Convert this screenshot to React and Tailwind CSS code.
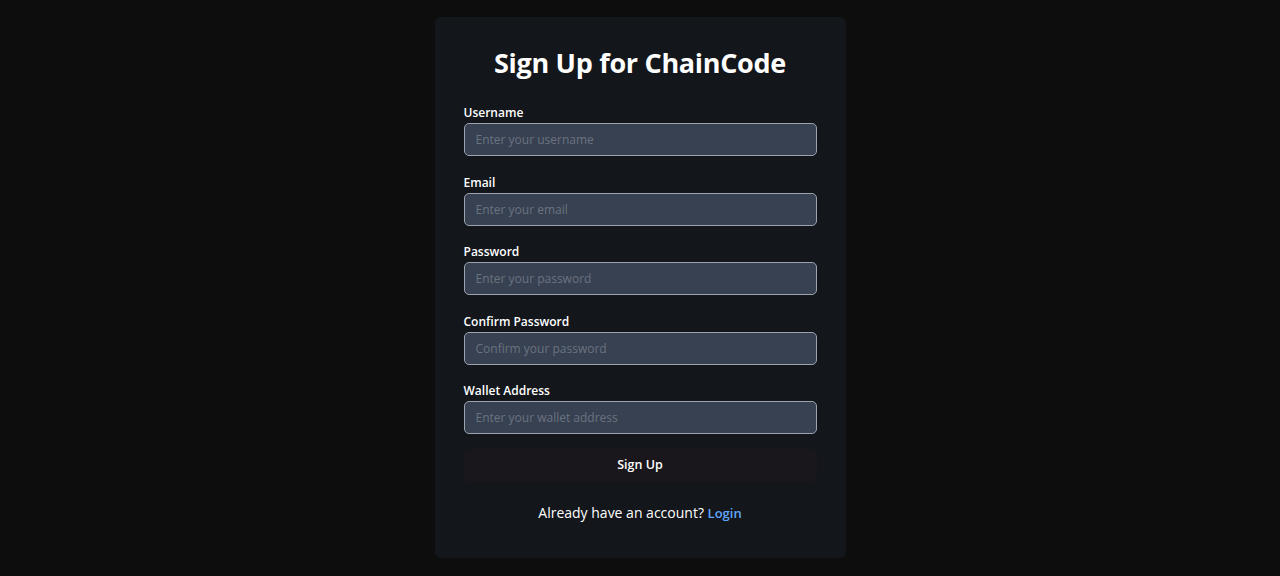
export default function App() {
  const fields = [
    ["Username", "Enter your username", "text"],
    ["Email", "Enter your email", "email"],
    ["Password", "Enter your password", "password"],
    ["Confirm Password", "Confirm your password", "password"],
    ["Wallet Address", "Enter your wallet address", "text"],
  ];
  return (
    <div
      className="min-h-[576px] w-full bg-[#0d0d0d] flex justify-center pt-[17px]"
      style={{ fontFamily: '"Open Sans", "Noto Sans", sans-serif' }}
    >
      <div className="w-[411px] h-[541px] bg-[#13161b] rounded-[6px] px-[29px] pt-[26px]">
        <h1 className="text-[27px] leading-[40px] font-bold text-white text-center tracking-[-0.3px]">
          Sign Up for ChainCode
        </h1>
        <div className="mt-[21px] flex flex-col gap-[17.5px]">
          {fields.map(([label, ph, type]) => (
            <div key={label} className="flex flex-col">
              <label className="text-[12px] leading-[18px] font-semibold text-white mb-[1px]">
                {label}
              </label>
              <input
                type={type}
                placeholder={ph}
                className="h-[33px] w-full rounded-[5px] border border-[#9ca3af] bg-[#374151] px-[11px] text-[12px] text-white placeholder:text-[#6b7280] outline-none"
              />
            </div>
          ))}
        </div>
        <button className="mt-[15px] h-[33px] w-full rounded-[5px] bg-[#19171c] text-[12.5px] font-semibold text-white">
          Sign Up
        </button>
        <p className="mt-[19px] text-center text-[14px] text-white leading-[24px]">
          Already have an account?{" "}
          <a href="#" className="text-[13px] font-semibold text-[#60a5fa]">
            Login
          </a>
        </p>
      </div>
    </div>
  );
}
